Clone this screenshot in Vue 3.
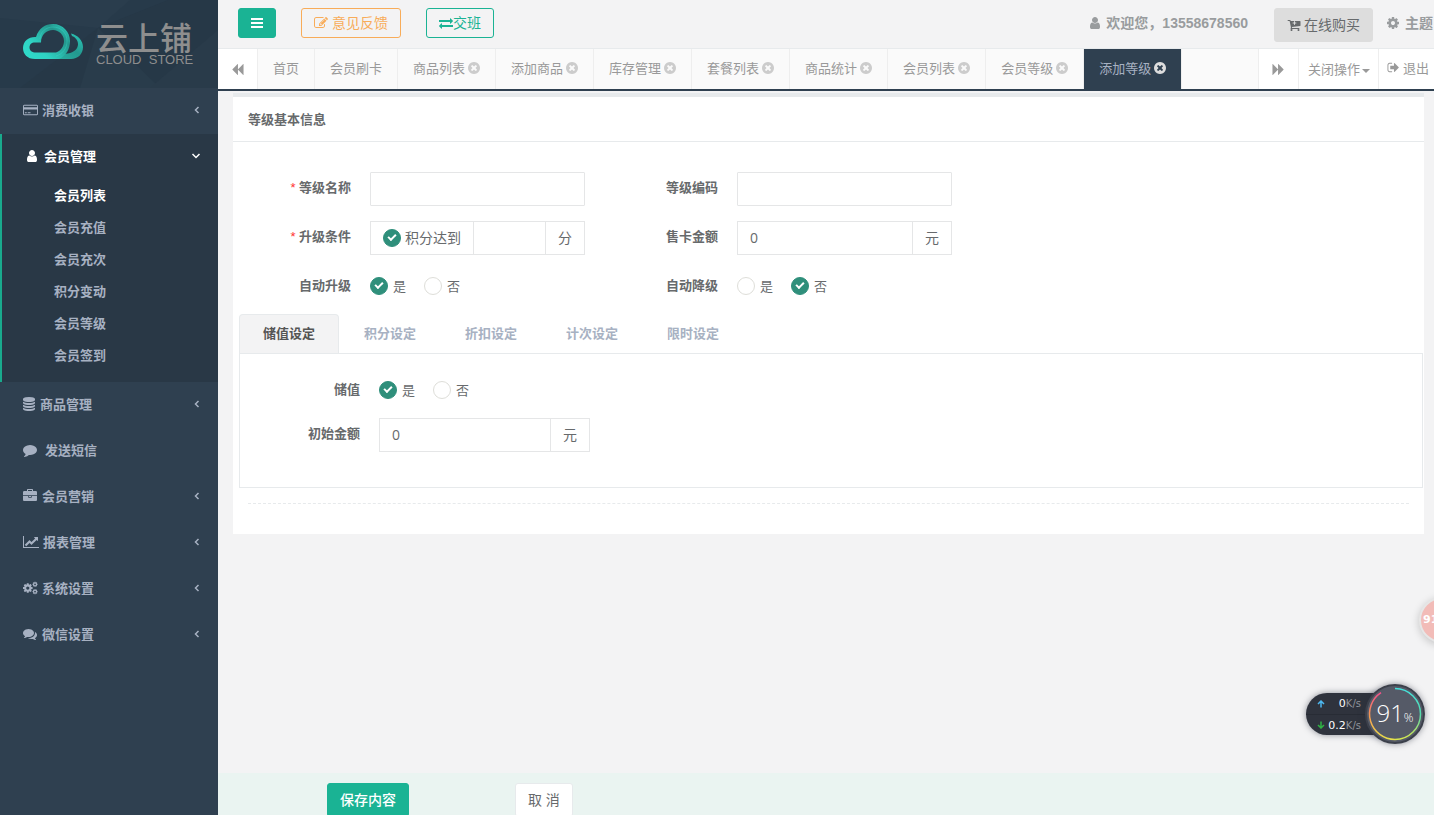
<script setup>
import { ref } from 'vue'

const paths = {
  user: 'M1536 1399q0 109-62.500 187t-150.500 78h-854q-88 0-150.500-78t-62.500-187q0-85 8.500-160.500t31.500-152 58.500-131 94-89 134.500-34.500q131 128 313 128t313-128q76 0 134.500 34.500t94 89 58.500 131 31.500 152 8.500 160.500zm-256-887q0 159-112.500 271.500t-271.500 112.500-271.500-112.500-112.500-271.500 112.500-271.500 271.500-112.500 271.500 112.500 112.500 271.500z',
  comment: 'M1792 896q0 174-120 321.500t-326 233-450 85.500q-70 0-145-8-198 175-460 242-49 14-114 22-17 2-30.500-9t-17.500-29v-1q-3-4-.5-12t2-10 4.500-9.500l6-9 7-8.500 8-9q7-8 31-34.500t34.500-38 31-39.500 32.500-51 27-59 26-76q-157-89-247.500-220t-90.500-281q0-130 71-248.500t191-204.500 286-136.500 348-50.500q244 0 450 85.500t326 233 120 321.500z',
  comments: 'M1408 768q0 139-94 257t-256.500 186.500-353.500 68.500q-86 0-176-16-124 88-278 128-36 9-86 16h-3q-11 0-20.500-8t-11.500-21q-1-3-1-6.500t.5-6.500 2-6l2.500-5 3.500-5.500 4-5 4.500-5 4-4.500q5-6 23-25t26-29.500 22.500-29 25-38.500 20.500-44q-124-72-195-177t-71-224q0-139 94-257t256.500-186.500 353.500-68.500 353.500 68.500 256.500 186.500 94 257zm384 256q0 120-71 224.500t-195 176.500q10 24 20.500 44t25 38.500 22.500 29 26 29.500 23 25q1 1 4 4.500t4.500 5 4 5 3.500 5.500l2.500 5 2 6 .5 6.500-1 6.500q-3 14-13 22t-22 7q-50-7-86-16-154-40-278-128-90 16-176 16-271 0-472-132 58 4 88 4 161 0 309-45t264-129q125-92 192-212t67-254q0-77-23-152 129 71 204 178t75 230z',
  bars: 'M128 256h1536v256H128zM128 768h1536v256H128zM128 1280h1536v256H128z',
  exchange: 'M1792 1184v192q0 13-9.500 22.500t-22.500 9.500h-1376v192q0 13-9.500 22.500t-22.500 9.500q-12 0-24-10l-319-320q-9-9-9-22 0-14 9-23l320-320q9-9 23-9 13 0 22.500 9.500t9.500 22.500v192h1376q13 0 22.500 9.500t9.500 22.500zm0-544q0 14-9 23l-320 320q-9 9-23 9-13 0-22.500-9.500t-9.500-22.500v-192h-1376q-13 0-22.500-9.500t-9.500-22.500v-192q0-13 9.500-22.500t22.500-9.500h1376v-192q0-14 9-23t23-9q12 0 24 10l319 319q9 9 9 23z',
  close: 'M1277 1122q0-26-19-45l-181-181 181-181q19-19 19-45 0-27-19-46l-90-90q-19-19-46-19-26 0-45 19l-181 181-181-181q-19-19-45-19-27 0-46 19l-90 90q-19 19-19 46 0 26 19 45l181 181-181 181q-19 19-19 45 0 27 19 46l90 90q19 19 46 19 26 0 45-19l181-181 181 181q19 19 45 19 27 0 46-19l90-90q19-19 19-46zm387-226q0 209-103 385.500t-279.500 279.500-385.500 103-385.500-103-279.500-279.500-103-385.500 103-385.500 279.500-279.500 385.500-103 385.500 103 279.500 279.500 103 385.500z',
  backward: 'M1683 141q19-19 32-13t13 32v1472q0 26-13 32t-32-13l-710-710q-9-9-13-19v710q0 26-13 32t-32-13l-710-710q-19-19-19-45t19-45l710-710q19-19 32-13t13 32v710q4-10 13-19z',
  forward: 'M109 141q-19-19-32-13t-13 32v1472q0 26 13 32t32-13l710-710q9-9 13-19v710q0 26 13 32t32-13l710-710q19-19 19-45t-19-45l-710-710q-19-19-32-13t-13 32v710q-4-10-13-19z',
  cog: 'M1152 896q0-106-75-181t-181-75-181 75-75 181 75 181 181 75 181-75 75-181zm512-109v222q0 12-8 23t-20 13l-185 28q-19 54-39 91 35 50 107 138 10 12 10 25t-9 23q-27 37-99 108t-94 71q-12 0-26-9l-138-108q-44 23-91 38-16 136-29 186-7 28-36 28h-222q-14 0-24.500-8.500t-11.500-21.500l-28-184q-49-16-90-37l-141 107q-10 9-25 9-14 0-25-11-126-114-165-168-7-10-7-23 0-12 8-23 15-21 51-66.500t54-70.500q-27-50-41-99l-183-27q-13-2-21-12.500t-8-23.500v-222q0-12 8-23t19-13l186-28q14-46 39-92-40-57-107-138-10-12-10-24 0-10 9-23 26-36 98.500-107.500t94.500-71.500q13 0 26 10l138 107q44-23 91-38 16-136 29-186 7-28 36-28h222q14 0 24.500 8.500t11.500 21.500l28 184q49 16 90 37l142-107q9-9 24-9 13 0 25 10 129 119 165 170 7 8 7 22 0 12-8 23-15 21-51 66.500t-54 70.500q26 50 41 98l183 28q13 2 21 12.500t8 23.500z',
  edit: 'M888 1184l116-116-152-152-116 116v56h96v96h56zm440-720q-16-16-33 1l-350 350q-17 17-1 33t33-1l350-350q17-17 1-33zm80 594v190q0 119-84.500 203.500t-203.500 84.500h-832q-119 0-203.500-84.500t-84.500-203.500v-832q0-119 84.500-203.500t203.500-84.500h832q63 0 117 25 15 7 18 23 3 17-9 29l-49 49q-14 14-32 8-23-6-45-6h-832q-66 0-113 47t-47 113v832q0 66 47 113t113 47h832q66 0 113-47t47-113v-126q0-13 9-22l64-64q15-15 35-7t20 29zm-96-738l288 288-672 672h-288v-288zm444 132l-92 92-288-288 92-92q28-28 68-28t68 28l152 152q28 28 28 68t-28 68z',
  database: 'M896 768q237 0 443-43t325-127v170q0 69-103 128t-280 93.500-385 34.500-385-34.500-280-93.500-103-128v-170q119 84 325 127t443 43zm0 768q237 0 443-43t325-127v170q0 69-103 128t-280 93.500-385 34.500-385-34.500-280-93.500-103-128v-170q119 84 325 127t443 43zm0-384q237 0 443-43t325-127v170q0 69-103 128t-280 93.500-385 34.500-385-34.500-280-93.500-103-128v-170q119 84 325 127t443 43zm0-1152q208 0 385 34.500t280 93.500 103 128v128q0 69-103 128t-280 93.500-385 34.500-385-34.500-280-93.500-103-128v-128q0-69 103-128t280-93.500 385-34.500z',
  briefcase: 'M640 256h512v-128h-512v128zm1152 640v480q0 66-47 113t-113 47h-1472q-66 0-113-47t-47-113v-480h672v160q0 26 19 45t45 19h320q26 0 45-19t19-45v-160h672zm-768 0v128h-256v-128h256zm768-480v384h-1792v-384q0-66 47-113t113-47h352v-160q0-40 28-68t68-28h576q40 0 68 28t28 68v160h352q66 0 113 47t47 113z',
  chart: 'M2048 1536v128h-2048v-1536h128v1408h1920zm-128-1248v435q0 21-19.500 29.500t-35.500-7.500l-121-121-633 633q-10 10-23 10t-23-10l-233-233-416 416-192-192 585-585q10-10 23-10t23 10l233 233 464-464-121-121q-16-16-7.500-35.500t29.500-19.500h435q14 0 23 9t9 23z',
  signout: 'M704 1440q0 4 1 20t.5 26.500-3 23.500-10 19.500-20.500 6.500h-320q-119 0-203.500-84.500t-84.500-203.500v-704q0-119 84.500-203.500t203.500-84.500h320q13 0 22.500 9.500t9.500 22.500q0 4 1 20t.5 26.500-3 23.500-10 19.500-20.500 6.500h-320q-66 0-113 47t-47 113v704q0 66 47 113t113 47h312l11.500 1 11.500 3 8 5.500 7 9 2 13.500zm928-544q0 26-19 45l-544 544q-19 19-45 19t-45-19-19-45v-288h-448q-26 0-45-19t-19-45v-384q0-26 19-45t45-19h448v-288q0-26 19-45t45-19 45 19l544 544q19 19 19 45z',
  cart: 'M1216 640q0-26-19-45t-45-19h-128v-128q0-26-19-45t-45-19-45 19-19 45v128h-128q-26 0-45 19t-19 45 19 45 45 19h128v128q0 26 19 45t45 19 45-19 19-45v-128h128q26 0 45-19t19-45zm-512 896q0 53-37.500 90.500t-90.500 37.500-90.500-37.500-37.500-90.500 37.500-90.500 90.500-37.500 90.500 37.500 37.500 90.500zm896 0q0 53-37.500 90.500t-90.500 37.500-90.500-37.500-37.500-90.500 37.500-90.500 90.500-37.500 90.500 37.500 37.500 90.500zm128-1088v512q0 24-16 42.500t-41 21.500l-1044 122q1 7 4.500 21.500t6 26.500 2.500 22q0 16-24 64h920q26 0 45 19t19 45-19 45-45 19h-1024q-26 0-45-19t-19-45q0-14 11-39.500t29.500-59.500 20.500-38l-177-823h-204q-26 0-45-19t-19-45 19-45 45-19h256q16 0 28.500 6.500t20 15.500 13 24.500 7.500 26.500 5.500 29.500 4.500 25.500h1201q26 0 45 19t19 45z',
  card: 'M160 192h1728q66 0 113 47t47 113v1088q0 66-47 113t-113 47H160q-66 0-113-47t-47-113V352q0-66 47-113t113-47zm0 128q-32 0-32 32v160h1792V352q0-32-32-32zM128 832v608q0 32 32 32h1728q32 0 32-32V832zm128 384h256v128H256zm384 0h384v128H640z'
}

const before = [{ label: '消费收银', icon: 'card', size: 'wide' }]
const after = [
  { label: '商品管理', icon: 'database', size: 'slim' },
  { label: '发送短信', icon: 'comment', size: 'loose', leaf: true },
  { label: '会员营销', icon: 'briefcase', size: 'normal' },
  { label: '报表管理', icon: 'chart', size: 'broad' },
  { label: '系统设置', icon: 'cogs', size: 'wide' },
  { label: '微信设置', icon: 'comments', size: 'normal' }
]
const subItems = ['会员列表', '会员充值', '会员充次', '积分变动', '会员等级', '会员签到']
const pageTabs = [
  { label: '首页' }, { label: '会员刷卡' },
  { label: '商品列表', closable: true }, { label: '添加商品', closable: true },
  { label: '库存管理', closable: true }, { label: '套餐列表', closable: true },
  { label: '商品统计', closable: true }, { label: '会员列表', closable: true },
  { label: '会员等级', closable: true }, { label: '添加等级', closable: true, active: true }
]
const settingTabs = ['储值设定', '积分设定', '折扣设定', '计次设定', '限时设定']
const activeSetting = ref(0)

const name = ref('')
const code = ref('')
const byPoints = ref(true)
const points = ref('')
const cardPrice = ref('0')
const autoUp = ref('yes')
const autoDown = ref('no')
const stored = ref('yes')
const initial = ref('0')
</script>

<template>
  <div class="app">
    <nav class="sidebar">
      <div class="brand">
        <svg class="facets" viewBox="0 0 218 88" preserveAspectRatio="none">
          <path d="M0 0H130L98 28L0 18Z" fill="#2a3d4d" />
          <path d="M98 28L168 0H218V30L160 88H20L98 28Z" fill="#263847" />
          <path d="M98 28L160 88H80Z" fill="#293c4b" />
          <path d="M218 30V88H150Z" fill="#293b4a" />
        </svg>
        <svg class="cloud" viewBox="0 0 60 36">
          <defs>
            <linearGradient id="teal" x1="0" y1="1" x2="1" y2="0.2">
              <stop offset="0" stop-color="#2fdccb" />
              <stop offset="0.35" stop-color="#2fd3c3" />
              <stop offset="0.8" stop-color="#24958c" />
              <stop offset="1" stop-color="#2cc5b6" />
            </linearGradient>
            <linearGradient id="tail" x1="1" y1="0" x2="0.3" y2="1">
              <stop offset="0" stop-color="#2bcabb" />
              <stop offset="0.6" stop-color="#23988f" />
              <stop offset="1" stop-color="#27aa9e" />
            </linearGradient>
          </defs>
          <path d="M48 9.500C55 11 60 17 60 23C60 30 55 35 48 35H32L38 30L45 29.500C51 28.500 55 25 55 20C55 16 52 13 49 12Z" fill="url(#tail)" />
          <path d="M12 35C4 35 0 30 0 24C0 17 6 12.500 13 13C16 4 22 0 30 0C40 0 47 8 47 17C47 25 43 32 36 35ZM13 28.500H33C38 27 41 22 41 17C41 11 36 6 30 6C23 6 18 11 18 18.500H13C9 18 6.500 20 6.500 23.500C6.500 26.500 9 28.500 13 28.500Z" fill="url(#teal)" fill-rule="evenodd" />
          <path d="M17 15C17 8 23 3 30 3C38 3 44 9 44 17C44 24 40 30 33 32" fill="none" stroke="#38e0cf" stroke-opacity=".35" />
        </svg>
        <div class="brand-text">
          <span class="brand-cn">云上铺</span>
          <span class="brand-en">CLOUD&nbsp; STORE</span>
        </div>
      </div>

      <a v-for="item in before" :key="item.label" href="#" class="nav-item">
        <svg class="ico" :class="item.size" viewBox="0 0 2048 1792"><path fill-rule="evenodd" :d="paths[item.icon]" /></svg>
        <span>{{ item.label }}</span>
        <svg class="chev" viewBox="0 0 8 8"><path d="M5.500 1L2.500 4L5.500 7" /></svg>
      </a>

      <div class="nav-open">
        <a href="#" class="nav-item current">
          <svg class="ico normal" viewBox="0 0 1792 1792"><path :d="paths.user" /></svg>
          <span>会员管理</span>
          <svg class="chev down" viewBox="0 0 10 8"><path d="M1.500 2L5 5.500L8.500 2" /></svg>
        </a>
        <ul>
          <li v-for="(sub, i) in subItems" :key="sub"><a href="#" :class="{ on: i === 0 }">{{ sub }}</a></li>
        </ul>
      </div>

      <a v-for="item in after" :key="item.label" href="#" class="nav-item">
        <svg v-if="item.icon === 'cogs'" class="ico wide" viewBox="0 0 2048 1792">
          <path :d="paths.cog" transform="translate(-120 130) scale(.86)" />
          <path :d="paths.cog" transform="translate(1230 -20) scale(.46)" />
          <path :d="paths.cog" transform="translate(1230 980) scale(.46)" />
        </svg>
        <svg v-else class="ico" :class="item.size" :viewBox="item.icon === 'chart' ? '0 0 2048 1792' : item.icon === 'database' ? '128 0 1536 1792' : '0 0 1792 1792'"><path :d="paths[item.icon]" /></svg>
        <span>{{ item.label }}</span>
        <svg v-if="!item.leaf" class="chev" viewBox="0 0 8 8"><path d="M5.500 1L2.500 4L5.500 7" /></svg>
      </a>
    </nav>

    <div class="page">
      <header class="topbar">
        <button type="button" class="btn menu" aria-label="菜单"><svg viewBox="0 0 1792 1792"><path :d="paths.bars" /></svg></button>
        <button type="button" class="btn feedback"><svg viewBox="0 0 1792 1792"><path :d="paths.edit" /></svg>意见反馈</button>
        <button type="button" class="btn shift"><svg viewBox="0 0 1792 1792"><path :d="paths.exchange" /></svg>交班</button>
        <div class="account">
          <svg viewBox="192 128 1408 1536"><path :d="paths.user" /></svg>
          <span>欢迎您，13558678560</span>
        </div>
        <button type="button" class="btn buy"><svg viewBox="0 0 1792 1792"><path :d="paths.cart" /></svg>在线购买</button>
        <a href="#" class="theme"><svg viewBox="0 0 1792 1792"><path :d="paths.cog" /></svg>主题</a>
      </header>

      <div class="tabbar">
        <button type="button" class="roll" aria-label="向左"><svg viewBox="0 0 1792 1792"><path :d="paths.backward" /></svg></button>
        <div class="tabs">
          <a v-for="tab in pageTabs" :key="tab.label" href="#" class="tab" :class="{ active: tab.active }">
            {{ tab.label }}<svg v-if="tab.closable" viewBox="128 128 1536 1536"><path :d="paths.close" /></svg>
          </a>
        </div>
        <button type="button" class="roll end" aria-label="向右"><svg viewBox="0 0 1792 1792"><path :d="paths.forward" /></svg></button>
        <button type="button" class="ops">关闭操作<i class="caret"></i></button>
        <a href="#" class="exit"><svg viewBox="0 0 1792 1792"><path :d="paths.signout" /></svg>退出</a>
      </div>

      <main class="content">
        <section class="panel">
          <h5>等级基本信息</h5>
          <form @submit.prevent>
            <div class="grid">
              <div class="row">
                <label class="lab" for="name"><em>*</em> 等级名称</label>
                <input id="name" v-model="name" class="box field" type="text">
              </div>
              <div class="row">
                <label class="lab" for="code">等级编码</label>
                <input id="code" v-model="code" class="box field" type="text">
              </div>
              <div class="row">
                <label class="lab" for="points"><em>*</em> 升级条件</label>
                <div class="group field">
                  <label class="addon pick"><input v-model="byPoints" type="checkbox" class="tick">积分达到</label>
                  <input id="points" v-model="points" class="box" type="text">
                  <span class="addon">分</span>
                </div>
              </div>
              <div class="row">
                <label class="lab" for="price">售卡金额</label>
                <div class="group field">
                  <input id="price" v-model="cardPrice" class="box" type="text">
                  <span class="addon">元</span>
                </div>
              </div>
              <div class="row">
                <span class="lab">自动升级</span>
                <div class="radios">
                  <label><input v-model="autoUp" type="radio" name="up" value="yes" class="tick">是</label>
                  <label><input v-model="autoUp" type="radio" name="up" value="no" class="tick">否</label>
                </div>
              </div>
              <div class="row">
                <span class="lab">自动降级</span>
                <div class="radios">
                  <label><input v-model="autoDown" type="radio" name="down" value="yes" class="tick">是</label>
                  <label><input v-model="autoDown" type="radio" name="down" value="no" class="tick">否</label>
                </div>
              </div>
            </div>

            <div class="settings">
              <div class="setting-tabs">
                <button v-for="(t, i) in settingTabs" :key="t" type="button" :class="{ on: i === activeSetting }" @click="activeSetting = i">{{ t }}</button>
              </div>
              <div class="setting-body">
                <div class="row">
                  <span class="lab">储值</span>
                  <div class="radios">
                    <label><input v-model="stored" type="radio" name="stored" value="yes" class="tick">是</label>
                    <label><input v-model="stored" type="radio" name="stored" value="no" class="tick">否</label>
                  </div>
                </div>
                <div class="row">
                  <label class="lab" for="initial">初始金额</label>
                  <div class="group field short">
                    <input id="initial" v-model="initial" class="box" type="text">
                    <span class="addon">元</span>
                  </div>
                </div>
              </div>
            </div>
            <hr>
          </form>
        </section>
      </main>

      <footer class="actions">
        <button type="button" class="save">保存内容</button>
        <button type="button" class="cancel">取 消</button>
      </footer>
    </div>

    <div class="bubble">91</div>
    <div class="meter">
      <div class="rates">
        <div><svg viewBox="0 0 8 8"><path d="M4 7.500V1.500M1 4L4 1L7 4" stroke="#4db8f0" /></svg><b>0</b><span>K/s</span></div>
        <div><svg viewBox="0 0 8 8"><path d="M4 .5V6.500M1 4L4 7L7 4" stroke="#2fb344" /></svg><b>0.2</b><span>K/s</span></div>
      </div>
      <div class="dial">
        <svg viewBox="0 0 60 60">
          <defs>
            <linearGradient id="right" x1="0" y1="0" x2="0" y2="1">
              <stop offset="0" stop-color="#45e0dc" /><stop offset=".5" stop-color="#55dcae" /><stop offset="1" stop-color="#d8e64c" />
            </linearGradient>
            <linearGradient id="left" x1="0" y1="0" x2="0" y2="1">
              <stop offset="0" stop-color="#f4508a" /><stop offset=".5" stop-color="#f59a51" /><stop offset="1" stop-color="#e8e04a" />
            </linearGradient>
          </defs>
          <circle cx="30" cy="30" r="29" fill="#555a67" stroke="#3c404b" stroke-width="2" />
          <path d="M30 4.500A25.500 25.500 0 0 1 30 55.500" fill="none" stroke="url(#right)" stroke-width="1.500" />
          <path d="M30 55.500A25.500 25.500 0 0 1 16 8.700" fill="none" stroke="url(#left)" stroke-width="1.500" />
        </svg>
        <p>91<small>%</small></p>
      </div>
    </div>
  </div>
</template>

<style>
html, body { overflow: hidden; }
</style>

<style scoped>
.app {
  position: relative;
  display: flex;
  height: 100vh;
  overflow: hidden;
  background: #f3f3f4;
  color: #676a6c;
  font: 13px/18px "Open Sans", "Noto Sans CJK SC", sans-serif;
}
*, *::before, *::after { box-sizing: border-box; }
a { color: inherit; text-decoration: none; }
button, input { font: inherit; color: inherit; margin: 0; }
button { cursor: pointer; white-space: nowrap; }
svg { flex: none; fill: currentColor; }

.sidebar { flex: none; width: 218px; background: #2f4050; color: #a7b1c2; font-weight: 600; }
.brand { position: relative; display: flex; gap: 13px; height: 88px; padding: 24px 0 0 23px; background: #273a4a; }
.facets { position: absolute; inset: 0; width: 100%; height: 100%; }
.cloud { position: relative; width: 60px; height: 36px; }
.brand-text { position: relative; color: #8e8e8e; margin-top: -5px; }
.brand-text span { display: block; white-space: nowrap; }
.brand-cn { font: 500 32px/34px "Noto Sans CJK SC", sans-serif; }
.brand-en { font: 13px/14px "Liberation Sans", sans-serif; -webkit-text-stroke: 0; }
.nav-item { display: flex; align-items: center; height: 46px; padding: 0 17px 2px 23px; }
.ico { height: 14px; width: 14px; margin-right: 5px; }
.ico.wide { width: 15px; margin-right: 4px; }
.ico.slim { width: 12px; }
.ico.broad { width: 16px; margin-right: 4px; }
.ico.loose { margin-right: 8px; }
.chev { width: 8px; height: 8px; margin-left: auto; fill: none; stroke: currentColor; stroke-width: 1.500; }
.chev.down { width: 10px; }
.nav-open { background: #293846; border-left: 2px solid #19aa8d; height: 248px; }
.nav-item.current { color: #fff; height: 45px; }
ul { list-style: none; margin: 0; padding: 0; }
li a { display: block; line-height: 32px; padding-left: 52px; }
li a.on { color: #fff; }

.page { flex: 1; min-width: 0; display: flex; flex-direction: column; }
.topbar { flex: none; display: flex; align-items: flex-start; height: 48px; padding: 8px 0 0 20px; background: #f3f3f4; color: #999c9e; font-size: 14px; white-space: nowrap; }
.topbar > * { flex: none; }
.btn { display: flex; align-items: center; justify-content: center; height: 30px; border-radius: 3px; border: 1px solid; background: none; padding: 0 12px; }
.btn svg, .theme svg { width: 14px; height: 14px; }
.account svg { width: 12px; height: 12px; }
.menu { background: #1ab394; border-color: #1ab394; width: 38px; }
.menu svg { color: #fff; }
.feedback { color: #f8ac59; margin-left: 25px; gap: 4px; width: 100px; }
.shift { color: #1ab394; margin-left: 25px; width: 68px; }
.account { display: flex; align-items: center; gap: 5px; margin-left: auto; height: 30px; font-family: "Liberation Sans", "Noto Sans CJK SC", sans-serif; font-weight: bold; }
.buy { margin-left: 26px; height: 34px; background: #ddd; border-color: #ddd; color: #676a6c; gap: 3px; }
.theme { display: flex; align-items: center; gap: 5px; height: 30px; margin-left: 13px; padding-right: 1px; font-weight: 600; }

.tabbar { flex: none; display: flex; height: 43px; border-top: 1px solid #e7eaec; border-bottom: 2px solid #2f4050; background: #fafafa; color: #999; }
.roll { width: 40px; flex: none; border: 0; border-right: 1px solid #eee; background: #fff; padding: 0; display: flex; align-items: center; justify-content: center; }
.roll svg { width: 13px; height: 13px; }
.roll.end { border-left: 1px solid #eee; width: 41px; }
.tabs { flex: 1; min-width: 0; display: flex; overflow: hidden; }
.tab { flex: none; display: flex; align-items: center; padding: 0 15px 3px; border-right: 1px solid #eee; }
.tab svg { width: 12px; height: 12px; margin-left: 3px; color: #ccc; }
.tab.active { background: #2f4050; color: #a7b1c2; }
.tab.active svg { color: #ddd; }
.ops { flex: none; display: flex; align-items: center; width: 80px; border: 0; border-right: 1px solid #eee; background: #fff; padding: 0 0 0 9px; }
.caret { border: 4px solid transparent; border-top-color: #999; border-bottom: 0; margin: 3px 0 0 2px; }
.exit { flex: none; display: flex; align-items: center; gap: 3px; width: 55px; padding: 0 0 3px 8px; background: #fff; white-space: nowrap; }
.exit svg { width: 13px; height: 13px; }

.content { flex: 1; min-height: 0; overflow: hidden; padding: 2px 10px 0 15px; }
.panel { background: #fff; border-top: 4px solid #e7eaec; }
h5 { margin: 0; padding: 13px 15px; font-size: 13px; line-height: 18px; font-weight: 600; border-bottom: 1px solid #e7eaec; }
form { padding: 30px 0; }
.grid { display: grid; grid-template-columns: repeat(2, minmax(340px, 367px)); row-gap: 15px; }
.row { display: flex; gap: 19px; height: 34px; }
.lab { flex: none; width: 118px; text-align: right; font-weight: 600; line-height: 30px; }
.lab em { color: #f33; font: 13px "Liberation Sans", sans-serif; }
.field { width: 215px; }
.field.short { width: 211px; }
.box { min-width: 0; height: 34px; border: 1px solid #e5e6e7; border-radius: 1px; background: #fff; padding: 0 12px 2px; font-size: 14px; outline: 0; }
.group { display: flex; font-size: 14px; }
.group .box { flex: 1; border-radius: 0; }
.addon { display: flex; align-items: center; border: 1px solid #e5e6e7; padding: 0 12px; height: 34px; }
.box + .addon { border-left: 0; }
.addon + .box { border-left: 0; }
.pick { gap: 4px; }
.tick { appearance: none; flex: none; position: relative; width: 18px; height: 18px; border: 1px solid #deded9; border-radius: 50%; background: #fff; }
.tick:checked { background: #2f8f7b; border-color: #2f8f7b; }
.tick:checked::after { content: ""; position: absolute; left: 4px; top: 4px; width: 8px; height: 5px; border: solid #fff; border-width: 0 0 2px 2px; transform: rotate(-45deg); }
.radios { display: flex; align-items: center; gap: 18px; height: 32px; }
.radios label { display: flex; align-items: center; gap: 5px; }

.settings { margin: 10px 1px 0 6px; }
.setting-tabs { display: flex; }
.setting-tabs button { height: 39px; padding: 0 23px 2px; margin-right: 1px; border: 1px solid transparent; border-bottom: 0; border-radius: 4px 4px 0 0; background: none; color: #a7b1c2; font-weight: 600; }
.setting-tabs button.on { background: #f3f3f4; border-color: #e7eaec; color: #555; }
.setting-body { border: 1px solid #e7eaec; padding: 20px 0 35px; }
.setting-body .lab { width: 120px; }
.setting-body .row + .row { margin-top: 10px; }
hr { margin: 15px 15px 0; border: 0; border-top: 1px dashed #e7eaec; }

.actions { flex: none; display: flex; align-items: flex-start; height: 42px; overflow: hidden; background: #eaf4f1; padding: 10px 0 0 109px; font-size: 14px; }
.actions button { height: 34px; border-radius: 3px; padding: 0 12px; border: 1px solid #1ab394; }
.save { background: #1ab394; color: #fff; font-weight: 500; }
.cancel { margin-left: 106px; background: #fff; }
.actions .cancel { border-color: #e7eaec; }

.bubble { position: absolute; right: -31px; top: 597px; width: 46px; height: 46px; border: 2px solid #e6e6e6; border-radius: 50%; background: #f2bcb8; color: #fff; font: bold 11px/42px "DejaVu Sans", sans-serif; padding-left: 2px; box-shadow: 0 2px 8px rgba(0, 0, 0, .2); }
.meter { position: absolute; right: 9px; top: 684px; display: flex; align-items: center; }
.rates { width: 89px; height: 42px; border-radius: 21px 0 0 21px; background: #2f333d; color: #fff; box-shadow: 0 0 6px rgba(40, 44, 60, .5); margin-right: -30px; }
.rates div { display: flex; align-items: center; justify-content: flex-end; height: 21px; padding-right: 34px; font: 11px "DejaVu Sans", sans-serif; }
.rates div + div { border-top: 1px solid #282c35; }
.rates svg { width: 8px; height: 8px; fill: none; stroke-width: 1.500; margin-left: 11px; margin-right: auto; }
.rates b { font-weight: 400; }
.rates span { color: #8f939b; font-size: 10px; }
.dial { position: relative; width: 60px; height: 60px; border-radius: 50%; box-shadow: 0 0 6px rgba(40, 44, 60, .5); }
.dial svg { display: block; width: 60px; height: 60px; }
.dial p { position: absolute; inset: 0; margin: 0; text-align: center; color: #fff; font: 300 24px/58px "Open Sans", sans-serif; }
.dial small { font-size: 12px; }
</style>
